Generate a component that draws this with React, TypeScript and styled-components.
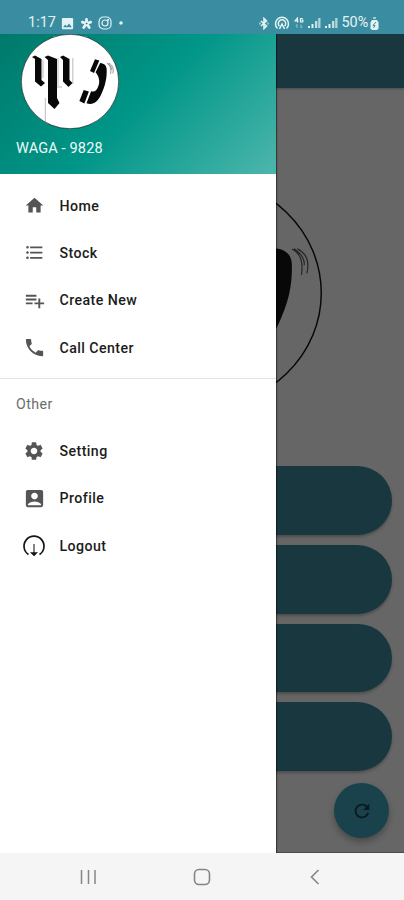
import React from 'react';
import styled, { createGlobalStyle } from 'styled-components';
import {
  MdAccountBox,
  MdFormatListBulleted,
  MdHome,
  MdPhone,
  MdPlaylistAdd,
  MdRefresh,
  MdSettings,
  MdImage,
} from 'react-icons/md';

const GlobalStyle = createGlobalStyle`
  * { box-sizing: border-box; }
  body { margin: 0; font-family: Roboto, "Liberation Sans", sans-serif; }
`;

const Phone = styled.div`
  display: flex;
  flex-direction: column;
  width: 404px;
  height: 900px;
  overflow: hidden;
`;

const StatusBar = styled.header`
  display: flex;
  justify-content: space-between;
  height: 34px;
  padding: 13px 25px 0 28px;
  background: #3a8da0;
  color: #e4f2f5;
`;

const StatusGroup = styled.div<{ $gap: number }>`
  display: flex;
  align-items: center;
  height: 20px;
  gap: ${(p) => p.$gap}px;
`;

const StatusText = styled.span<{ $size: number; $width: number }>`
  width: ${(p) => p.$width}px;
  font-size: ${(p) => p.$size}px;
  line-height: 20px;
  white-space: nowrap;
`;

const Stage = styled.div`
  position: relative;
  height: 819px;
  flex: none;
  overflow: hidden;
  background: #666;
`;

const Screen = styled.main`
  display: flex;
  flex-direction: column;
  height: 100%;
  border-bottom: 1px solid #4a4a4a;
`;

const AppBar = styled.div`
  flex: none;
  height: 54px;
  background: #18373f;
  box-shadow: 0 1px 2px rgba(0, 0, 0, 0.25);
`;

const Hero = styled.div`
  display: flex;
  justify-content: center;
  padding-top: 90px;
  height: 378px;
`;

const ActionList = styled.div`
  display: flex;
  flex-direction: column;
  gap: 10px;
  padding: 0 12px;
`;

const Action = styled.div`
  height: 68.8px;
  border-radius: 35px;
  background: #18373f;
  box-shadow: 0 2px 3px rgba(0, 0, 0, 0.25);
`;

const RefreshButton = styled.div`
  display: flex;
  align-items: center;
  justify-content: center;
  align-self: flex-end;
  width: 55px;
  height: 55px;
  margin: 12px 15px 0 0;
  border-radius: 50%;
  background: #19424c;
  color: #0a1a1e;
  box-shadow: 0 4px 6px rgba(0, 0, 0, 0.28);
`;

const Drawer = styled.aside`
  position: absolute;
  top: 0;
  left: 0;
  width: 276px;
  height: 819px;
  background: #fff;
  box-shadow: 1px 0 1px rgba(0, 0, 0, 0.45);
`;

const DrawerHeader = styled.div`
  height: 139.5px;
  padding-left: 16px;
  background: linear-gradient(135deg, #00796b 0%, #009688 50%, #4db6ac 100%);
  color: #f0faf8;
`;

const LogoSlot = styled.div`
  height: 95px;
  padding-left: 5px;
`;

const Account = styled.div`
  padding-top: 9px;
  font-size: 14.5px;
  line-height: 22px;
  letter-spacing: 0.15px;
`;

const Menu = styled.nav<{ $top: number }>`
  padding-top: ${(p) => p.$top}px;
`;

const MenuItem = styled.div`
  display: flex;
  align-items: center;
  height: 47.3px;
  padding-left: 22px;
  gap: 13.5px;
  color: #1c1c1c;
  font-size: 14.2px;
  font-weight: 500;
  letter-spacing: 0.42px;
`;

const IconBox = styled.span`
  display: flex;
  align-items: center;
  justify-content: center;
  width: 24px;
  height: 24px;
  color: #555;
`;

const Divider = styled.div`
  height: 1px;
  margin-top: 7px;
  background: #e4e4e4;
`;

const SectionTitle = styled.div`
  padding: 16px 0 0 16px;
  color: #6c6c6c;
  font-size: 14.2px;
  line-height: 18px;
  letter-spacing: 0.45px;
`;

const NavBar = styled.footer`
  display: flex;
  align-items: center;
  justify-content: space-between;
  flex: 1;
  padding: 1px 80px 0 79px;
  background: #f5f5f5;
`;

function Logo({ width, height, fill }: { width: number; height: number; fill: string }) {
  return (
    <svg width={width} height={height} viewBox="21 34 98 95" preserveAspectRatio="none">
      <ellipse cx="70" cy="81.5" rx="48.7" ry="47.2" fill={fill} stroke="#080808" strokeWidth="0.6" />
      <g fill="#080808">
        <path d="M32 57l3-1.5 6.5 3.5v21l3.5 3-4 3.5-6-5V59z" />
        <path d="M44.500 57l3.500-1.500 9 3.500v39l2.500 5-5 6-6.500-6V60z" />
        <path d="M60 57l3-1.500 6.500 3.500v21l3 3-4 4-5.500-5.500V60z" />
        <path d="M95 59.300l4.300 1.300-5.300 12.400-4-2z" />
        <path d="M100.200 63.100C104.500 63.500 106.700 66 106.700 70c.1 8-1 15-6 25.400-3 5.500-7 10.200-14.200 7.900l4.600-12c2 .7 3.700 0 5-1 2-2.500 3.300-6 3.100-9.200-.2-3-1.200-6-3.600-8.800z" />
        <path d="M83.700 90l5.200 1.500-4.500 12-5-2.500z" />
      </g>
      <path
        d="M43 60v18M58 58v28M72.800 58v26M45.300 98v26M57 87h5"
        fill="none"
        stroke="#777"
        strokeWidth="0.5"
      />
      <path
        d="M106.800 63.300C109.800 64.800 111.500 68 110.600 74M107.600 63.200C111.200 65.500 112 68.500 111.700 70M108.900 63.200C112.600 65 114 68.500 112.800 73.400"
        fill="none"
        stroke="#222"
        strokeWidth="0.45"
      />
    </svg>
  );
}

function LogoutIcon() {
  return (
    <svg width="24" height="24" viewBox="0 0 24 24" fill="none" stroke="#151515">
      <path d="M6.500 20.500A10 10 0 1 1 17.500 20.500" strokeWidth="1.700" />
      <path d="M12 10v10" stroke="#777" strokeWidth="1.800" />
      <path d="M8.500 18.500L12 22l3.500-3.500z" fill="#151515" strokeWidth="0.500" />
    </svg>
  );
}

function Flower() {
  return (
    <svg width="13" height="13" viewBox="0 0 14 14" stroke="currentColor" strokeWidth="3" strokeLinecap="round">
      <path d="M7 7V2.500M7 7L2.500 5.500M7 7l4.500-1.500M7 7l-3 4.300M7 7l3 4.300" />
      <circle cx="7" cy="7" r=".5" stroke="#3a8da0" strokeWidth="1" />
    </svg>
  );
}

function Camera() {
  return (
    <svg width="14" height="14" viewBox="0 0 14 14" fill="none" stroke="currentColor" strokeWidth="1.200">
      <rect x="1" y="1" width="12" height="12" rx="4.500" />
      <circle cx="7" cy="7" r="3" />
      <circle cx="10.200" cy="3.800" r=".5" />
    </svg>
  );
}

function BluetoothBadge() {
  return (
    <svg width="12" height="13" viewBox="0 0 12 13" fill="none" stroke="currentColor">
      <path d="M3 4l5.500 5L6 11.500v-10L8.500 4 3 9" strokeWidth="1.600" />
      <path d="M1.500 6.500h1M9.500 6.500h1" strokeWidth="2" />
    </svg>
  );
}

function Hotspot() {
  return (
    <svg width="16" height="14" viewBox="0 0 16 14" fill="none" stroke="currentColor" strokeWidth="1.500">
      <path d="M3.500 12.500A6.500 6.500 0 1 1 12.500 12.500" />
      <path d="M5.500 10.300A3.700 3.700 0 1 1 10.500 10.300" />
      <path d="M5.500 13L8 8l2.500 5" />
    </svg>
  );
}

function Signal() {
  return (
    <svg width="13" height="12" viewBox="0 0 13 12" fill="currentColor">
      <path d="M0 9h2v2H0zM3.500 7h2v4h-2z" />
      <path d="M7 4h2.300v7H7z" opacity=".8" />
      <path d="M10.200 1h2.300v10h-2.300z" opacity=".7" />
    </svg>
  );
}

function DataIcon() {
  return (
    <svg width="10" height="12" viewBox="0 0 10 12" fill="none" stroke="currentColor">
      <path d="M3.500 5.500V1L1 4h3.500M8.800 1.500H6.500v3.500h2.300V3.200H7.500" strokeWidth="1.200" />
      <path d="M3 11V7.500M1.700 9L3 7.500M7 7.500V11M7 11l1.300-1.500" opacity=".5" />
    </svg>
  );
}

function Battery() {
  return (
    <svg width="9" height="13" viewBox="0 0 9 13">
      <path d="M3 0h3v2H3z" fill="currentColor" opacity=".6" />
      <path d="M2 3h5l1.500 2.500v6L7 13H2L.5 11.500v-6z" fill="currentColor" />
      <path d="M6 5L3 8.500h2L3.500 11" fill="none" stroke="#3a8da0" />
    </svg>
  );
}

const mainItems = [
  { label: 'Home', icon: <MdHome size={21} /> },
  { label: 'Stock', icon: <MdFormatListBulleted size={21} /> },
  { label: 'Create New', icon: <MdPlaylistAdd size={23} /> },
  { label: 'Call Center', icon: <MdPhone size={23} /> },
];

const otherItems = [
  { label: 'Setting', icon: <MdSettings size={22} /> },
  { label: 'Profile', icon: <MdAccountBox size={23} /> },
  { label: 'Logout', icon: <LogoutIcon /> },
];

export default function App() {
  return (
    <>
      <GlobalStyle />
      <Phone>
        <StatusBar>
          <StatusGroup $gap={5}>
            <StatusText $size={14.5} $width={27}>1:17</StatusText>
            <MdImage size={15} />
            <Flower />
            <Camera />
            <svg width="10" height="4"><circle cx="4" cy="2" r="1.8" fill="currentColor" /></svg>
          </StatusGroup>
          <StatusGroup $gap={4}>
            <BluetoothBadge />
            <Hotspot />
            <DataIcon />
            <Signal />
            <Signal />
            <StatusGroup $gap={0}>
              <StatusText $size={14.4} $width={28.5}>50%</StatusText>
              <Battery />
            </StatusGroup>
          </StatusGroup>
        </StatusBar>
        <Stage>
          <Screen>
            <AppBar />
            <Hero>
              <Logo width={240} height={230} fill="#666" />
            </Hero>
            <ActionList>
              <Action />
              <Action />
              <Action />
              <Action />
            </ActionList>
            <RefreshButton>
              <MdRefresh size={22} />
            </RefreshButton>
          </Screen>
          <Drawer>
            <DrawerHeader>
              <LogoSlot>
                <Logo width={98} height={95} fill="#fff" />
              </LogoSlot>
              <Account>WAGA - 9828</Account>
            </DrawerHeader>
            <Menu $top={8.5}>
              {mainItems.map((item) => (
                <MenuItem key={item.label}>
                  <IconBox>{item.icon}</IconBox>
                  {item.label}
                </MenuItem>
              ))}
            </Menu>
            <Divider />
            <SectionTitle>Other</SectionTitle>
            <Menu $top={14.3}>
              {otherItems.map((item) => (
                <MenuItem key={item.label}>
                  <IconBox>{item.icon}</IconBox>
                  {item.label}
                </MenuItem>
              ))}
            </Menu>
          </Drawer>
        </Stage>
        <NavBar>
          <svg width="18" height="18" viewBox="0 0 18 18" stroke="#858585" strokeWidth="1.500">
            <path d="M2.500 2v14M9.500 2v14M16 2v14" />
          </svg>
          <svg width="18" height="18" viewBox="0 0 18 18" fill="none" stroke="#858585" strokeWidth="1.600">
            <rect x="1.500" y="1.500" width="15" height="15" rx="4.500" />
          </svg>
          <svg width="18" height="18" viewBox="0 0 18 18" fill="none" stroke="#858585" strokeWidth="1.600">
            <path d="M12.500 2L5.500 9l7 7" />
          </svg>
        </NavBar>
      </Phone>
    </>
  );
}
